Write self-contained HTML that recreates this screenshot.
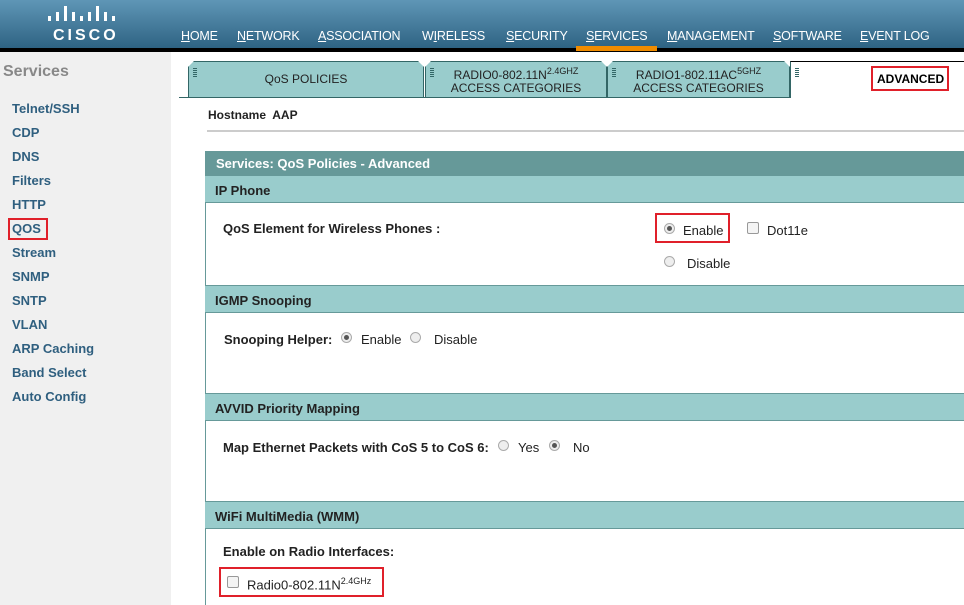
<!DOCTYPE html><html><head><style>
body{margin:0;width:964px;height:605px;overflow:hidden;font-family:"Liberation Sans",Arial,sans-serif;background:#fff;position:relative}
.a{position:absolute}
#hd{left:0;top:0;width:964px;height:48px;background:linear-gradient(#5f96b6,#2e6383)}
#bk{left:0;top:48px;width:964px;height:4px;background:#000}
.nav{top:29px;color:#fff;font-size:12.5px;letter-spacing:-0.2px}
.nav u{text-decoration:underline}
#sb{left:0;top:52px;width:171px;height:553px;background:#f0f0f0}
.si{left:12px;font-size:13px;font-weight:bold;color:#2f5f7f}
.tab{top:61px;height:36px;background:#99cccc;border:1px solid #336666;border-bottom:none;font-size:12px;color:#222;text-align:center;box-sizing:border-box;clip-path:polygon(6px 0,calc(100% - 6px) 0,100% 6px,100% 100%,0 100%,0 6px)}
.grip{position:absolute;left:4px;top:6px;width:4px;height:10px;background:repeating-linear-gradient(#336666 0 1px,transparent 1px 2px)}
.hdr{left:205px;width:759px;height:28px;background:#99cccc;border-top:1px solid #669999;border-bottom:1px solid #669999;box-sizing:border-box;font-size:13px;font-weight:bold;color:#222;padding:7px 0 0 10px}
.t{font-size:13px;color:#222}
.b{font-weight:bold}
.rad{width:11px;height:11px;border-radius:50%;border:1px solid #aaa;background:#eee;box-sizing:border-box}
.rad.on::after{content:"";position:absolute;left:2px;top:2px;width:5px;height:5px;border-radius:50%;background:#555}
.cb{width:12px;height:12px;border:1px solid #999;background:#f4f4f4;border-radius:2px;box-sizing:border-box}
.red{border:2px solid #e0202a;box-sizing:border-box}
</style></head><body>
<div id="hd" class="a"></div>
<div class="a" style="left:47px;top:5px;width:70px;height:18px">
<svg width="70" height="18" viewBox="0 0 70 18"><g fill="#fff"><rect x="1" y="11" width="3" height="5"/><rect x="9" y="7" width="3" height="9"/><rect x="17" y="1" width="3" height="15"/><rect x="25" y="7" width="3" height="9"/><rect x="33" y="11" width="3" height="5" /><rect x="41" y="7" width="3" height="9"/><rect x="49" y="1" width="3" height="15"/><rect x="57" y="7" width="3" height="9"/><rect x="65" y="11" width="3" height="5"/></g></svg></div>
<div class="a" style="left:53px;top:27px;color:#fff;font-weight:bold;font-size:16px;letter-spacing:3px">CISCO</div>
<div class="a nav" style="left:181px"><u>H</u>OME</div>
<div class="a nav" style="left:237px"><u>N</u>ETWORK</div>
<div class="a nav" style="left:318px"><u>A</u>SSOCIATION</div>
<div class="a nav" style="left:422px">W<u>I</u>RELESS</div>
<div class="a nav" style="left:506px"><u>S</u>ECURITY</div>
<div class="a nav" style="left:586px"><u>S</u>ERVICES</div>
<div class="a nav" style="left:667px"><u>M</u>ANAGEMENT</div>
<div class="a nav" style="left:773px"><u>S</u>OFTWARE</div>
<div class="a nav" style="left:860px"><u>E</u>VENT LOG</div>
<div id="bk" class="a"></div>
<div class="a" style="left:576px;top:46px;width:81px;height:5px;background:#f08c00"></div>
<div id="sb" class="a"></div>
<div class="a" style="left:3px;top:63px;font-size:16px;font-weight:bold;color:#888">Services</div>
<div class="a si" style="top:101px">Telnet/SSH</div>
<div class="a si" style="top:125px">CDP</div>
<div class="a si" style="top:149px">DNS</div>
<div class="a si" style="top:173px">Filters</div>
<div class="a si" style="top:197px">HTTP</div>
<div class="a si" style="top:221px">QOS</div>
<div class="a red" style="left:8px;top:218px;width:40px;height:22px"></div>
<div class="a si" style="top:245px">Stream</div>
<div class="a si" style="top:269px">SNMP</div>
<div class="a si" style="top:293px">SNTP</div>
<div class="a si" style="top:317px">VLAN</div>
<div class="a si" style="top:341px">ARP Caching</div>
<div class="a si" style="top:365px">Band Select</div>
<div class="a si" style="top:389px">Auto Config</div>
<div class="a tab" style="left:188px;width:236px;padding-top:10px"><div class="grip"></div>QoS POLICIES</div>
<div class="a tab" style="left:425px;width:182px;padding-top:3px;line-height:13px"><div class="grip"></div>RADIO0-802.11N<sup style="font-size:9px">2.4GHZ</sup><br>ACCESS CATEGORIES</div>
<div class="a tab" style="left:607px;width:183px;padding-top:3px;line-height:13px"><div class="grip"></div>RADIO1-802.11AC<sup style="font-size:9px">5GHZ</sup><br>ACCESS CATEGORIES</div>
<div class="a" style="left:790px;top:61px;width:174px;height:37px;border-top:1px solid #000;border-left:1px solid #336666;box-sizing:border-box"><div class="grip"></div></div>
<div class="a red" style="left:871px;top:66px;width:78px;height:25px;font-size:12px;font-weight:bold;padding:4px 0 0 4px">ADVANCED</div>
<div class="a" style="left:179px;top:97px;width:612px;height:1px;background:#336666"></div>
<div class="a t b" style="left:208px;top:108px;font-size:12px">Hostname&nbsp; AAP</div>
<div class="a" style="left:207px;top:130px;width:757px;height:2px;background:#ccc"></div>
<div class="a" style="left:205px;top:151px;width:1px;height:454px;background:#669999"></div>
<div class="a" style="left:205px;top:151px;width:759px;height:24px;background:#669999;color:#fff;font-weight:bold;font-size:13px;padding:5px 0 0 11px;box-sizing:border-box">Services: QoS Policies - Advanced</div>
<div class="a hdr" style="top:175px">IP Phone</div>
<div class="a t b" style="left:223px;top:221px">QoS Element for Wireless Phones :</div>
<div class="a red" style="left:655px;top:213px;width:75px;height:30px"></div>
<div class="a rad on" style="left:664px;top:223px"></div><div class="a t" style="left:683px;top:223px">Enable</div>
<div class="a cb" style="left:747px;top:222px"></div><div class="a t" style="left:767px;top:223px">Dot11e</div>
<div class="a rad" style="left:664px;top:256px"></div><div class="a t" style="left:687px;top:256px">Disable</div>
<div class="a hdr" style="top:285px">IGMP Snooping</div>
<div class="a t b" style="left:224px;top:332px">Snooping Helper:</div>
<div class="a rad on" style="left:341px;top:332px"></div><div class="a t" style="left:361px;top:332px">Enable</div>
<div class="a rad" style="left:410px;top:332px"></div><div class="a t" style="left:434px;top:332px">Disable</div>
<div class="a hdr" style="top:393px">AVVID Priority Mapping</div>
<div class="a t b" style="left:223px;top:440px">Map Ethernet Packets with CoS 5 to CoS 6:</div>
<div class="a rad" style="left:498px;top:440px"></div><div class="a t" style="left:518px;top:440px">Yes</div>
<div class="a rad on" style="left:549px;top:440px"></div><div class="a t" style="left:573px;top:440px">No</div>
<div class="a hdr" style="top:501px">WiFi MultiMedia (WMM)</div>
<div class="a t b" style="left:223px;top:544px">Enable on Radio Interfaces:</div>
<div class="a red" style="left:219px;top:567px;width:165px;height:30px"></div>
<div class="a cb" style="left:227px;top:576px"></div><div class="a t" style="left:247px;top:576px">Radio0-802.11N<sup style="font-size:9px">2.4GHz</sup></div>
</body></html>
